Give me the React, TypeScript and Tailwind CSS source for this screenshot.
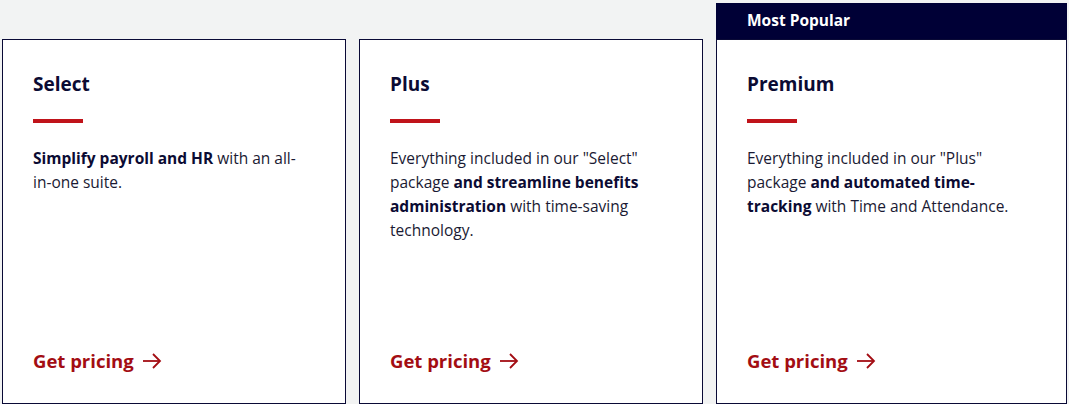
const plans = [
  {
    name: "Select",
    popular: false,
    body: (
      <>
        <b className="font-bold text-[#0b0b33]">Simplify payroll and HR</b> with an all-in-one suite.
      </>
    ),
  },
  {
    name: "Plus",
    popular: false,
    body: (
      <>
        Everything included in our "Select" package{" "}
        <b className="font-bold text-[#0b0b33]">and streamline benefits administration</b> with
        time-saving technology.
      </>
    ),
  },
  {
    name: "Premium",
    popular: true,
    body: (
      <>
        Everything included in our "Plus" package{" "}
        <b className="font-bold text-[#0b0b33]">and automated time-tracking</b> with Time and
        Attendance.
      </>
    ),
  },
];

function ArrowRight() {
  return (
    <svg width="20" height="16" viewBox="0 0 20 16" fill="none" stroke="currentColor" strokeWidth="1.8">
      <path d="M1 8h17" />
      <path d="M11 1l7 7-7 7" />
    </svg>
  );
}

export default function App() {
  return (
    <div
      className="flex h-[404px] w-full gap-[13px] bg-[#f2f3f3] pl-[2px] pt-[3px]"
      style={{ fontFamily: "'Open Sans', 'Liberation Sans', sans-serif" }}
    >
      {plans.map((p, i) => (
        <div key={p.name} className={`flex flex-col ${i === 2 ? "w-[351px]" : "w-[344px]"}`}>
          {p.popular ? (
            <div className="flex h-[36px] items-center bg-[#000036] pl-[31px] text-[15.5px] font-bold text-white">
              Most Popular
            </div>
          ) : (
            <div className="h-[36px]" />
          )}
          <div className="flex flex-1 flex-col border border-[#0a0a36] bg-white px-[30px] pb-[28px] pt-[30px]">
            <h2 className="text-[19px] leading-[28px] font-bold text-[#0b0b33]">{p.name}</h2>
            <div className="mt-[21px] h-[4px] w-[50px] bg-[#c0131a]" />
            <p className="mt-[23px] pr-[8px] text-[15.5px] leading-[24px] text-[#1a1a33]">{p.body}</p>
            <a
              href="#"
              className="mt-auto flex items-center gap-[8px] text-[18.5px] leading-[28px] font-bold text-[#a30d13]"
            >
              <span>Get pricing</span>
              <ArrowRight />
            </a>
          </div>
        </div>
      ))}
    </div>
  );
}
